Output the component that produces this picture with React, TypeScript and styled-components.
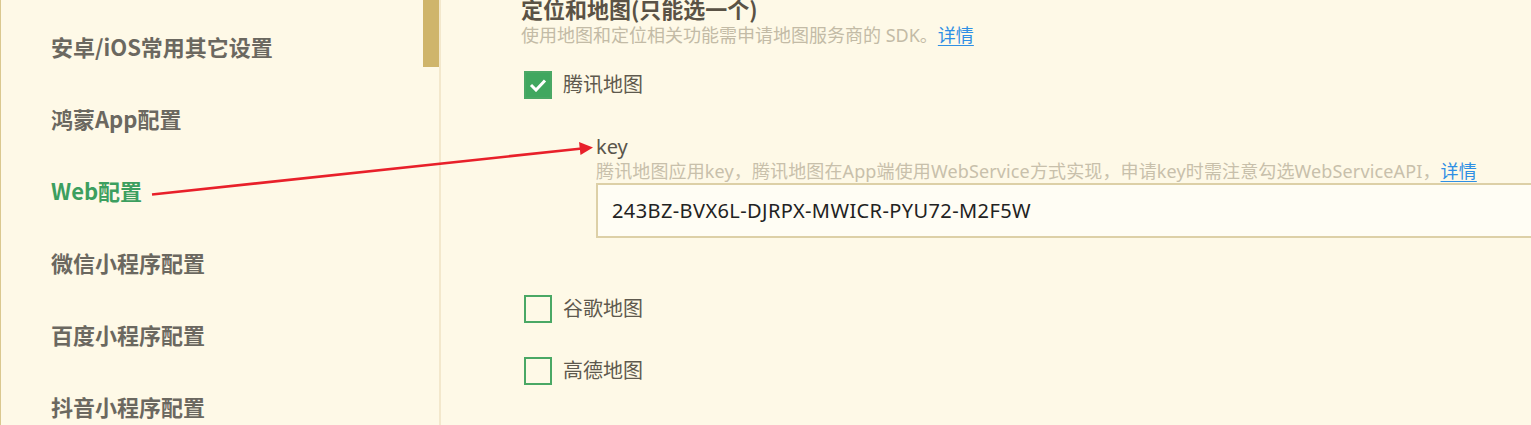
import React from "react";
import styled, { createGlobalStyle } from "styled-components";

const GlobalStyle = createGlobalStyle`
  html, body {
    margin: 0;
    padding: 0;
    background: #fef9e7;
    overflow: hidden;
  }
  body {
    font-family: "Noto Sans", "Noto Sans CJK SC", sans-serif;
  }
`;

const menuItems = [
  "安卓/iOS常用其它设置",
  "鸿蒙App配置",
  "Web配置",
  "微信小程序配置",
  "百度小程序配置",
  "抖音小程序配置",
];

const App: React.FC = () => {
  return (
    <Page>
      <GlobalStyle />
      <Sidebar>
        <MenuList>
          {menuItems.map((item) => (
            <MenuItem key={item} active={item === "Web配置"}>
              {item}
            </MenuItem>
          ))}
        </MenuList>
        <ScrollTrack>
          <ScrollThumb />
        </ScrollTrack>
      </Sidebar>
      <Main>
        <SectionTitle>定位和地图(只能选一个)</SectionTitle>
        <Description>
          使用地图和定位相关功能需申请地图服务商的 SDK。<Link>详情</Link>
        </Description>

        <OptionRow gap={24}>
          <CheckBox checked>
            <svg width="18" height="14" viewBox="0 0 18 14">
              <polyline
                points="2,7 7,12 16,2.5"
                fill="none"
                stroke="#ffffff"
                strokeWidth="3"
              />
            </svg>
          </CheckBox>
          <OptionLabel>腾讯地图</OptionLabel>
        </OptionRow>

        <KeyBlock>
          <FieldLabel>key</FieldLabel>
          <Hint>
            腾讯地图应用key，腾讯地图在App端使用WebService方式实现，申请key时需注意勾选WebServiceAPI，
            <Link>详情</Link>
          </Hint>
          <KeyInput>243BZ-BVX6L-DJRPX-MWICR-PYU72-M2F5W</KeyInput>
        </KeyBlock>

        <OptionRow gap={57}>
          <CheckBox />
          <OptionLabel>谷歌地图</OptionLabel>
        </OptionRow>
        <OptionRow gap={34}>
          <CheckBox />
          <OptionLabel>高德地图</OptionLabel>
        </OptionRow>
      </Main>

      <ArrowOverlay width="1531" height="425" viewBox="0 0 1531 425">
        <line
          x1="152"
          y1="194.5"
          x2="582"
          y2="148.5"
          stroke="#e8202a"
          strokeWidth="2.6"
        />
        <polygon points="593,147.5 579,142 580.5,155" fill="#e8202a" />
      </ArrowOverlay>
    </Page>
  );
};

export default App;

type ActiveProps = { active?: boolean };
type GapProps = { gap: number };
type CheckProps = { checked?: boolean };

const Page = styled.div`
  position: relative;
  display: flex;
  width: 1531px;
  height: 425px;
  overflow: hidden;
  background: #fef9e7;
`;

const Sidebar = styled.div`
  display: flex;
  width: 438px;
  flex-shrink: 0;
  border-left: 1px solid #dac88f;
  border-right: 2px solid #f3e8cc;
`;

const MenuList = styled.div`
  flex: 1;
  display: flex;
  flex-direction: column;
  padding-top: 10px;
  padding-left: 50px;
`;

const MenuItem = styled.div<ActiveProps>`
  height: 72px;
  flex-shrink: 0;
  display: flex;
  align-items: center;
  font-family: "Noto Sans CJK SC", "Noto Sans", sans-serif;
  font-size: 22px;
  font-weight: bold;
  white-space: nowrap;
  color: ${(p) => (p.active ? "#3c9f5f" : "#6b6860")};
`;

const ScrollTrack = styled.div`
  width: 16px;
  flex-shrink: 0;
`;

const ScrollThumb = styled.div`
  height: 67px;
  background: #cfb56b;
`;

const Main = styled.div`
  flex: 1;
  display: flex;
  flex-direction: column;
  padding-left: 80px;
  margin-top: -7px;
  min-width: 0;
`;

const SectionTitle = styled.div`
  font-family: "Noto Sans CJK SC", sans-serif;
  font-size: 22px;
  font-weight: bold;
  line-height: 30px;
  color: #5a5245;
  white-space: nowrap;
`;

const Description = styled.div`
  font-size: 18px;
  line-height: 24px;
  color: #c3bba6;
  white-space: nowrap;
`;

const Link = styled.span`
  color: #2f8fe4;
  text-decoration: underline;
  text-underline-offset: 3px;
`;

const OptionRow = styled.div<GapProps>`
  display: flex;
  align-items: center;
  flex-shrink: 0;
  height: 28px;
  margin-top: ${(p) => p.gap}px;
  padding-left: 3px;
`;

const CheckBox = styled.div<CheckProps>`
  box-sizing: border-box;
  width: 28px;
  height: 28px;
  display: flex;
  align-items: center;
  justify-content: center;
  background: ${(p) => (p.checked ? "#40a75f" : "transparent")};
  border: 2px solid #4aa865;
`;

const OptionLabel = styled.span`
  margin-left: 11px;
  font-size: 20px;
  line-height: 28px;
  color: #5e594e;
`;

const KeyBlock = styled.div`
  display: flex;
  flex-direction: column;
  flex-shrink: 0;
  margin-top: 36px;
  padding-left: 75px;
`;

const FieldLabel = styled.div`
  font-size: 20px;
  line-height: 24px;
  color: #5a564c;
`;

const Hint = styled.div`
  font-size: 18px;
  line-height: 24px;
  letter-spacing: 0.13px;
  color: #c8c0ab;
  white-space: nowrap;
`;

const KeyInput = styled.div`
  box-sizing: border-box;
  height: 55px;
  margin-right: -20px;
  padding-left: 14px;
  display: flex;
  align-items: center;
  font-size: 20px;
  letter-spacing: 0.4px;
  color: #222222;
  background: #fffdf4;
  border: 2px solid #ddd0a7;
`;

const ArrowOverlay = styled.svg`
  position: absolute;
  left: 0;
  top: 0;
  pointer-events: none;
`;
